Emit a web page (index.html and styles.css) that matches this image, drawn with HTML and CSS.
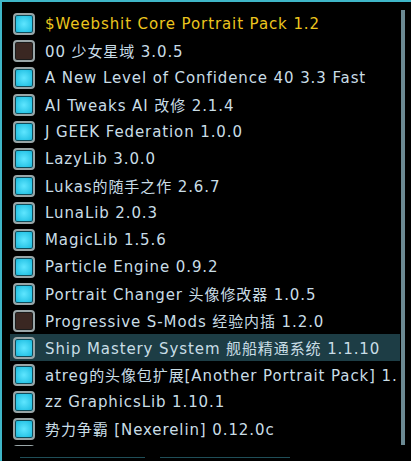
FILE: index.html
```html
<!DOCTYPE html>
<html lang="zh-CN">
<head>
    <meta charset="UTF-8">
    <title>Mods</title>
    <link rel="stylesheet" href="styles.css">
</head>
<body>
    <div class="panel">
        <div class="mod-list">
            <div class="mod"><span class="check on"></span><span class="name name-gold">$Weebshit Core Portrait Pack 1.2</span></div>
            <div class="mod"><span class="check"></span><span class="name">00 少女星域 3.0.5</span></div>
            <div class="mod"><span class="check on"></span><span class="name">A New Level of Confidence 40 3.3 Fast</span></div>
            <div class="mod"><span class="check on"></span><span class="name">AI Tweaks AI 改修 2.1.4</span></div>
            <div class="mod"><span class="check on"></span><span class="name">J GEEK Federation 1.0.0</span></div>
            <div class="mod"><span class="check on"></span><span class="name">LazyLib 3.0.0</span></div>
            <div class="mod"><span class="check on"></span><span class="name">Lukas的随手之作 2.6.7</span></div>
            <div class="mod"><span class="check on"></span><span class="name">LunaLib 2.0.3</span></div>
            <div class="mod"><span class="check on"></span><span class="name">MagicLib 1.5.6</span></div>
            <div class="mod"><span class="check on"></span><span class="name">Particle Engine 0.9.2</span></div>
            <div class="mod"><span class="check on"></span><span class="name">Portrait Changer 头像修改器 1.0.5</span></div>
            <div class="mod"><span class="check"></span><span class="name">Progressive S-Mods 经验内插 1.2.0</span></div>
            <div class="mod mod-active"><span class="check on"></span><span class="name">Ship Mastery System 舰船精通系统 1.1.10</span></div>
            <div class="mod"><span class="check on"></span><span class="name">atreg的头像包扩展[Another Portrait Pack] 1.</span></div>
            <div class="mod"><span class="check on"></span><span class="name">zz GraphicsLib 1.10.1</span></div>
            <div class="mod"><span class="check on"></span><span class="name">势力争霸 [Nexerelin] 0.12.0c</span></div>
            <div class="mod"><span class="check on"></span></div>
        </div>
        <div class="scrollbar"></div>
    </div>
    <div class="buttons">
        <div class="btn btn-left"></div>
        <div class="btn btn-right"></div>
    </div>
</body>
</html>
```

FILE: styles.css
```css
body {
    margin: 0;
    width: 411px;
    height: 461px;
    overflow: hidden;
    background: #000;
    border-left: 2px solid #3fb6c8;
    border-top: 2px solid #3fb6c8;
    box-sizing: border-box;
    font-family: 'DejaVu Sans', 'Noto Sans CJK SC', sans-serif;
}
.panel {
    display: flex;
    padding: 8px 0 0 8px;
}
.mod-list {
    width: 390px;
    height: 436px;
    overflow: hidden;
}
.mod {
    display: flex;
    align-items: center;
    height: 27px;
    padding-left: 3px;
    white-space: nowrap;
}
.mod-active {
    background: #1d3d45;
}
.check {
    flex: none;
    width: 22px;
    height: 22px;
    box-sizing: border-box;
    border: 2px solid #9aa6a8;
    border-radius: 4px;
    background: #3a2722;
    box-shadow: inset 0 0 0 1px #1b1b1b;
    margin-right: 10px;
}
.check.on {
    background: radial-gradient(circle, #5fe6ff 0%, #28c4e6 70%, #1a9fbf 100%);
    box-shadow: inset 0 0 0 1px #0e4a58;
}
.name {
    font-size: 15px;
    color: #c9dde6;
    letter-spacing: 0.9px;
}
.name-gold {
    color: #ecc51e;
}
.scrollbar {
    width: 4px;
    height: 435px;
    margin-left: 1px;
    background: #6b8993;
}
.buttons {
    display: flex;
    gap: 15px;
    padding: 11px 0 0 18px;
}
.btn {
    height: 2px;
    border-top: 1px solid #1f4e58;
}
.btn-left {
    width: 125px;
}
.btn-right {
    width: 130px;
}
```
